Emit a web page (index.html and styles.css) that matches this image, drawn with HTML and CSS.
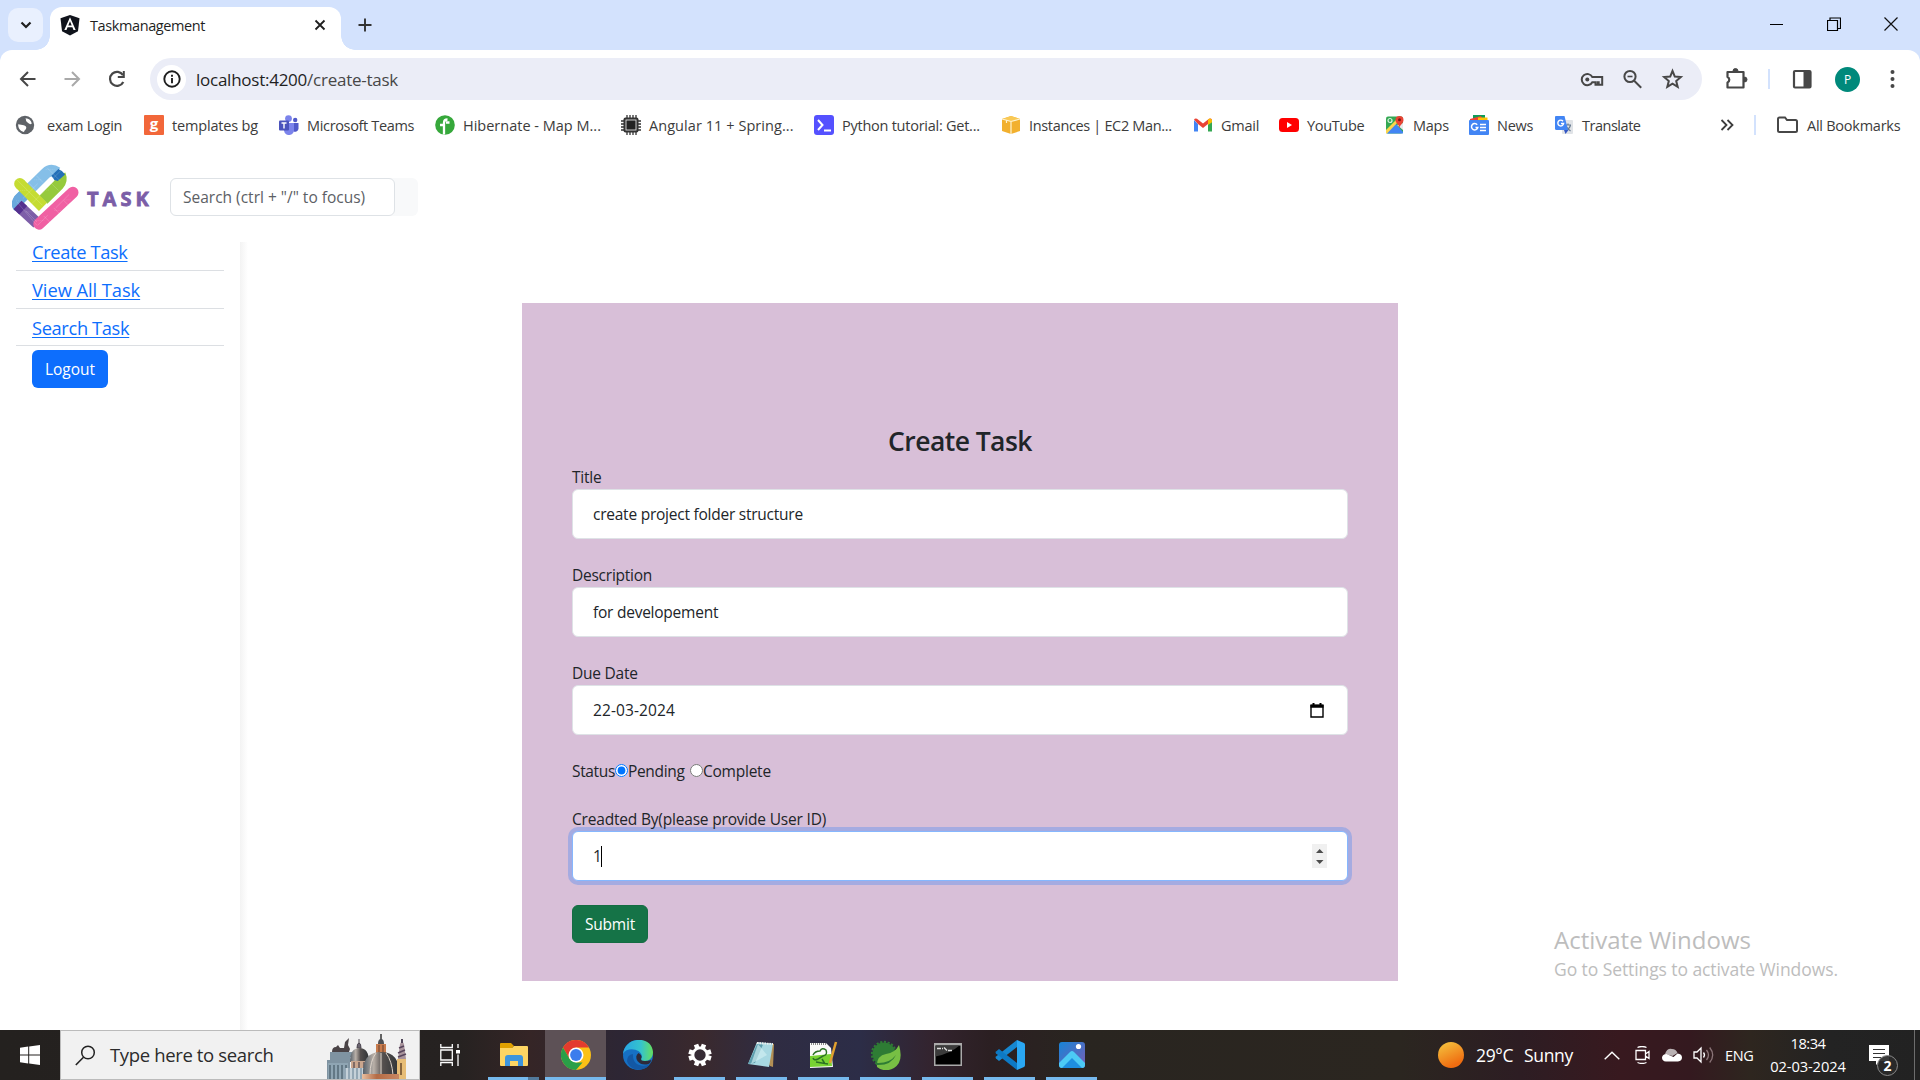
FILE: index.html
```html
<!DOCTYPE html>
<html lang="en">
<head>
<meta charset="utf-8">
<title>Taskmanagement</title>
<link rel="stylesheet" href="styles.css">
</head>
<body>
<div class="screen">

  <header class="tabstrip">
    <div class="tab-search"><svg width="12" height="8" viewBox="0 0 12 8"><path d="M1.5 1.5 6 6l4.500-4.500" fill="none" stroke="#1f1f1f" stroke-width="2.200"/></svg></div>
    <div class="tab">
      <svg width="20" height="22" viewBox="0 0 20 22"><path d="M10 1 19.500 4.300 18 17.300 10 21.500 2 17.300.5 4.300Z" fill="#10131c"/><path d="M10 3.300 4.300 16h2.200l1.100-2.800h4.800l1.100 2.800h2.200ZM10 7.300l1.700 4.100H8.300Z" fill="#fff"/></svg>
      <span class="tab-title">Taskmanagement</span>
      <svg width="12" height="12" viewBox="0 0 12 12"><path d="m1.500 1.500 9 9m0-9-9 9" stroke="#1f1f1f" stroke-width="1.800"/></svg>
    </div>
    <svg class="new-tab" width="14" height="14" viewBox="0 0 14 14"><path d="M7 .5v13M.5 7h13" stroke="#333" stroke-width="1.900"/></svg>
    <div class="window-buttons">
      <svg width="14" height="14" viewBox="0 0 14 14"><path d="M0 7.500h13" stroke="#000"/></svg>
      <svg width="14" height="14" viewBox="0 0 14 14"><path d="M.5 3.500h10v10H.5ZM3 3.500v-2.500h10.500v10.500h-3" fill="none" stroke="#000" stroke-width="1.200"/></svg>
      <svg width="14" height="14" viewBox="0 0 14 14"><path d="m.5.5 13 13m0-13-13 13" stroke="#111" stroke-width="1.200"/></svg>
    </div>
  </header>

  <div class="toolbar">
    <svg class="ic" viewBox="0 0 24 24"><path d="M19.500 12H5m7-7-7 7 7 7" fill="none" stroke="#474747" stroke-width="2"/></svg>
    <svg class="ic" viewBox="0 0 24 24"><path d="M4.500 12H19m-7-7 7 7-7 7" fill="none" stroke="#a9a9a9" stroke-width="2"/></svg>
    <svg class="ic" viewBox="0 0 24 24"><path d="M18.300 15A7 7 0 1 1 18 8.200" fill="none" stroke="#474747" stroke-width="2.200"/><path d="M19.800 4v7h-7l0-2h5V4Z" fill="#474747"/></svg>
    <div class="omnibox">
      <span class="site-info"><svg width="18" height="18" viewBox="0 0 18 18"><circle cx="9" cy="9" r="7.700" fill="none" stroke="#1f1f1f" stroke-width="1.900"/><path d="M9 8v5.200M9 4.700v2" stroke="#1f1f1f" stroke-width="1.900"/></svg></span>
      <span class="url">localhost:4200<span class="path">/create-task</span></span>
      <svg class="ic" viewBox="0 0 24 24"><g fill="none" stroke="#474747" stroke-width="2"><path d="M12.300 10a5.600 5.600 0 1 0 0 5.200h3.200v2.600h2.200v-2.600h1v2.600h3.500v-7.800Z"/></g><circle cx="7.300" cy="12.600" r="2" fill="#474747"/></svg>
      <svg class="ic" viewBox="0 0 24 24"><g fill="none" stroke="#474747" stroke-width="2"><circle cx="10" cy="9.500" r="5.600"/><path d="m14.200 13.700 7 7"/><path d="M7.500 9.500h5" stroke-width="1.600"/></g></svg>
      <svg class="ic" viewBox="0 0 24 24"><path d="m12.500 4 2.300 5.600 6 .5-4.600 3.900 1.500 5.900-5.200-3.200-5.200 3.200 1.500-5.900-4.600-3.900 6-.5Z" fill="none" stroke="#474747" stroke-width="2"/></svg>
    </div>
    <svg class="ic puzzle" viewBox="0 0 24 24"><path d="M3.500 5h16v15.500h-16v-5a3 3 0 0 0 0-5.500Z" fill="none" stroke="#474747" stroke-width="2.200" stroke-linejoin="round"/><path d="M9 4a2.500 2.500 0 0 1 5 0ZM20.500 10a2.500 2.500 0 0 1 0 5Z" fill="#474747" stroke="#474747"/></svg>
    <i class="divider"></i>
    <svg class="ic" viewBox="0 0 24 24"><rect x="4" y="4" width="16.500" height="16.500" rx="1" fill="none" stroke="#474747" stroke-width="2.200"/><path d="M13.500 4h7v16.500h-7Z" fill="#474747"/></svg>
    <span class="avatar">P</span>
    <svg class="ic" viewBox="0 0 24 24"><g fill="#474747"><circle cx="12.500" cy="5" r="2"/><circle cx="12.500" cy="12" r="2"/><circle cx="12.500" cy="19" r="2"/></g></svg>
  </div>

  <nav class="bookmarks">
    <a class="exam"><svg viewBox="0 0 20 20"><circle cx="10" cy="10" r="9.200" fill="#5f6368"/><path d="M10.500 3.200c3.600.2 5.700 2.300 6.300 5.200-1.900 1.900-3.400-.2-4.700-1.300-1.700-1-.6-2.300-1.600-3.900ZM3.200 9.300l4.300.7c1.600.4 3.800.8 3.800 2.600 0 2-1.600 2.200-2.400 4.400C5.200 16 3 13.300 3.200 9.300Z" fill="#fff"/></svg><span>exam Login</span></a>
    <a><i class="g-mark">g</i><span class="l2">templates bg</span></a>
    <a><svg viewBox="0 0 20 20"><circle cx="9.500" cy="3.600" r="3.400" fill="#7b83eb"/><circle cx="16.200" cy="5" r="2.200" fill="#5059c9"/><path d="M13 8h6.500v5.500a3.500 3.500 0 0 1-5 3Z" fill="#5059c9"/><path d="M5 8h10v6.500a5 5 0 0 1-10 1Z" fill="#7b83eb"/><rect y="5.500" width="10" height="10" rx="1" fill="#4b53bc"/><path d="M2.500 8h5M5 8v5.500" stroke="#fff" stroke-width="1.400"/></svg><span class="l3">Microsoft Teams</span></a>
    <a><svg viewBox="0 0 20 20"><circle cx="10" cy="10" r="9.800" fill="#36a83b"/><path d="M9 19.500V7.800q0-3.300 3.500-3.300M5 10h4m2-2.500h3.500" fill="none" stroke="#fff" stroke-width="2.300"/></svg><span class="l0">Hibernate - Map M...</span></a>
    <a><svg viewBox="0 0 20 20"><g stroke="#333" stroke-width="1.300"><path d="M6 0v20M9 0v20M12 0v20M15 0v20M0 6h20M0 9h20M0 12h20M0 15h20"/></g><rect x="2.500" y="2.500" width="15" height="15" rx="2" fill="#333"/><rect x="5" y="5" width="10" height="10" fill="#222" stroke="#ddd" stroke-width=".9"/></svg><span class="l1">Angular 11 + Spring...</span></a>
    <a><svg viewBox="0 0 20 20"><rect width="20" height="20" rx="3" fill="#5551ff"/><path d="m4 5 4.500 5L4 15m6 .5h7" fill="none" stroke="#fff" stroke-width="2"/></svg><span>Python tutorial: Get...</span></a>
    <a><svg viewBox="0 0 20 20"><path d="m1 4 9-3 9 3v12l-9 3-9-3Z" fill="#f2b02e"/><path d="m1 4 9 2.500L19 4l-9-3Z" fill="#f9c955"/><path d="m1 4 9 2.500L19 4M10 6.500V19M5.500 5v3" fill="none" stroke="#fff3cf" stroke-width="1.200"/></svg><span class="l3">Instances | EC2 Man...</span></a>
    <a><svg viewBox="0 0 20 20"><path d="M1 5v11.500h4V9Z" fill="#4285f4"/><path d="M19 5v11.500h-4V9Z" fill="#34a853"/><path d="M1 4.500Q2 3 4 3.700l6 4.800 6-4.800q2-.7 3 .8L15 9l-5 4-5-4Z" fill="#ea4335"/><path d="M15 4.500q3-2.200 4 .7v2L15 10Z" fill="#fbbc04"/></svg><span>Gmail</span></a>
    <a><svg viewBox="0 0 20 20"><rect y="3" width="20" height="14" rx="3.500" fill="#f00"/><path d="m8 7 5 3-5 3Z" fill="#fff"/></svg><span class="l3">YouTube</span></a>
    <a><svg viewBox="0 0 20 20"><rect x="1" y="1.500" width="17" height="17" rx="2" fill="#34a853"/><path d="m1 17 9-9 8 9v1.500H2Z" fill="#4285f4"/><path d="M1 15 12 4l2 2L2 18.500H1Z" fill="#fbd64b"/><path d="m12 10 6 5V8Z" fill="#e8eaed"/><path d="M14.500 13c0-3-4-4.500-4-8a4 4 0 0 1 8 0c0 3.500-4 5-4 8Z" fill="#ea4335"/><circle cx="14.500" cy="4.700" r="1.500" fill="#7d1710"/><circle cx="5" cy="5.500" r="2" fill="none" stroke="#d8f3df" stroke-width="1.200"/></svg><span>Maps</span></a>
    <a><svg viewBox="0 0 20 20"><path d="M4 0h12v5H4Z" fill="#0c9d58"/><path d="m1 4 11-3 2 4H1Z" fill="#ea4335"/><path d="M9 2.500h9.500V6H9Z" fill="#ffc107"/><rect y="5" width="20" height="15" rx="1" fill="#4285f4"/><path d="M8.200 9.700A3.200 3.200 0 1 0 8.800 12.500H6.500M11 9.500h6M11 12.500h6M11 15.500h6" fill="none" stroke="#fff" stroke-width="1.500"/></svg><span>News</span></a>
    <a><svg viewBox="0 0 20 20"><rect x="8" y="5" width="11" height="14" rx="1" fill="#e0e3e7"/><path d="M11 10h6m-3-1.500V10m2.500 0q-1 4-4.500 5m0-4q1.500 3 4.500 5" fill="none" stroke="#667b91" stroke-width="1.200"/><path d="M1.500 1h9l3.500 14H2.500Q1 15 1 13.500V2Z" fill="#4285f4"/><path d="m10 15 4.500 0L11.500 19Z" fill="#3457c4"/><path d="M9 6.200A2.900 2.900 0 1 0 9.600 8.500H7" fill="none" stroke="#fff" stroke-width="1.400"/></svg><span class="l4">Translate</span></a>
    <svg class="overflow" viewBox="0 0 14 12"><path d="m1.500 1 5 5-5 5m6-10 5 5-5 5" fill="none" stroke="#3c3c3c" stroke-width="1.800"/></svg>
    <i class="divider"></i>
    <a class="all"><svg viewBox="0 0 22 20"><path d="M2 4q0-1.500 1.500-1.500H9l2 2.500h8.500Q21 5 21 6.500v9q0 1.500-1.500 1.500h-16Q2 17 2 15.500Z" fill="none" stroke="#474747" stroke-width="2"/></svg><span>All Bookmarks</span></a>
  </nav>

  <main class="page">
    <div class="page-head">
      <svg class="logo" viewBox="12 17 199 197">
        <g fill="none" stroke-width="34">
          <path d="M29 127 113 44Q128 30 146 42" stroke="#85bfe8"/>
          <path d="M29 142Q25 132 34 122L52 104" stroke="#6aa9dd" stroke-linecap="round"/>
          <path d="m29 140 58 54" stroke="#7d5ea8"/>
          <path d="m28 139 17 16" stroke="#54308f"/>
          <path d="M92 196 193 102" stroke="#f060a3" stroke-linecap="round"/>
          <path d="M105 124 150 79Q162 66 155 49" stroke="#96ca3d"/>
        </g>
        <path d="m129 52 21-20q13 5 20 16l-22 20-10-3Z" fill="#2470b8"/>
        <path d="m35 76 69 69" stroke="#c5dc32" stroke-width="34"/>
        <circle cx="35" cy="76" r="17" fill="#c5dc32"/>
        <g stroke="#fff" stroke-opacity=".25" stroke-width="2" fill="none"><path d="m24 62 78 78M62 74l30 30m-8-52 20 20m12-44 40 40m-38-4 32 32M26 130l60 70m-34-44 34 34m20-18 24 24m6-48 24 24m6-46 18 18M44 120l44-44m-24 66 44-44m-20 102 30-30m24-22 40-40m-18-78-40 40"/><path d="M112 33h26M78 64h24M36 96h22M100 95h24M24 127h20M52 160h20M82 186h26M138 156h20M168 124h20" stroke-dasharray="3 3"/></g>
      </svg>
      <span class="brand">TASK</span>
      <div class="search-group"><input class="search" type="text" placeholder="Search (ctrl + &quot;/&quot; to focus)"></div>
    </div>
    <div class="page-body">
      <aside class="sidebar">
        <ul class="menu">
          <li><a href="#">Create Task</a></li>
          <li><a href="#" class="mid">View All Task</a></li>
          <li><a href="#">Search Task</a></li>
        </ul>
        <button class="btn btn-primary">Logout</button>
      </aside>
      <form class="card">
        <h2>Create Task</h2>
        <div class="field"><label>Title</label><div class="input">create project folder structure</div></div>
        <div class="field"><label>Description</label><div class="input">for developement</div></div>
        <div class="field"><label>Due Date</label><div class="input date"><span>22-03-2024</span>
          <svg width="14" height="15" viewBox="0 0 14 15"><path d="M1 2.500h12V14H1Z" fill="none" stroke="#000" stroke-width="1.400"/><path d="M.5 1.500h13v3.300H.5ZM2.500 0h2v2h-2Zm7 0h2v2h-2Z"/></svg></div></div>
        <div class="status"><span class="st">Status</span><input type="radio" name="s" checked><span class="pend">Pending</span><input type="radio" name="s"><span class="comp">Complete</span></div>
        <div class="field"><label class="wide">Creadted By(please provide User ID)</label><div class="input focus"><span>1<i class="caret"></i></span>
          <svg class="spin" viewBox="0 0 15 24"><path fill="#f0f0f0" d="M0 0h15v24H0Z"/><path d="M4 9h7.500L7.700 5ZM4 16h7.500l-3.800 4Z" fill="#4d4d4d"/></svg></div></div>
        <button class="btn btn-success" type="button">Submit</button>
      </form>
    </div>
    <div class="watermark"><div class="wm-1">Activate Windows</div><div class="wm-2">Go to Settings to activate Windows.</div></div>
  </main>

  <footer class="taskbar">
    <div class="start"><svg width="20" height="20" viewBox="0 0 20 20"><path d="M0 2.700 8.200 1.600V9.500H0Zm9.200-1.300L20 0v9.500H9.200ZM0 10.500h8.200v8L0 17.300Zm9.200 0H20V20L9.200 18.600Z" fill="#fff"/></svg></div>
    <div class="tb-search">
      <svg width="21" height="21" viewBox="0 0 21 21"><circle cx="13" cy="7.500" r="6.300" fill="none" stroke="#222" stroke-width="1.500"/><path d="M8.500 12.200.8 20" stroke="#222" stroke-width="1.600"/></svg>
      <span>Type here to search</span>
      <svg class="skyline" viewBox="0 0 85 45">
        <defs>
          <linearGradient id="dome"><stop offset="0" stop-color="#55606a"/><stop offset=".3" stop-color="#b9b0a8"/><stop offset=".55" stop-color="#55504f"/><stop offset="1" stop-color="#2f3336"/></linearGradient>
          <linearGradient id="copper"><stop offset="0" stop-color="#e8bfa0"/><stop offset=".4" stop-color="#b46b45"/><stop offset="1" stop-color="#c98762"/></linearGradient>
        </defs>
        <path d="M5 18h22v5h-2v22H2V26h3Z" fill="#7f93a1"/><path d="M3 29h20v16H3Z" fill="#8fa5b3"/><path d="M5 31v14m4-14v14m4-14v14m4-14v14m4-14v14" stroke="#566977" stroke-width="1.500"/>
        <path d="M7 18q0-5 4-5l2-2 2 3h4l1-6 4-4-1 7 2 4-1 3Z" fill="#4a4346"/>
        <path d="M34 9V5m0 4q2 0 2 5h-4q0-5 2-5Z" stroke="#4c4650" fill="#6b6570"/><path d="M25 28q0-14 9.500-14T44 28Z" fill="url(#dome)"/><path d="M26 27h18v11H26Z" fill="#caa68e"/><path d="M29 28v8m5-8v8m5-8v8" stroke="#67585a" stroke-width="1.500"/>
        <path d="M19 34h24v11H19Z" fill="#93a7b5"/><path d="M22 34v11m4-11v11m4-11v11m4-11v11m4-11v11" stroke="#dbe3e8" stroke-width="1.400"/>
        <path d="M56 0v6" stroke="#333" stroke-width="1.500"/><path d="M53 10q0-5 3-5t3 5Z" fill="#4c4f54"/><path d="M51 10h10v10H51Z" fill="#c87c4e"/><path d="M54 11v8m4-8v8" stroke="#66402f"/>
        <path d="M38 41q-1-23 18-23t18 23Z" fill="url(#dome)"/><path d="M56 19v22M51 19q-6 8-6 22m16-22q6 8 7 22" fill="none" stroke="#ddd3c9" stroke-width="1"/>
        <path d="M72 25h9v20h-9Z" fill="#e7bd76"/><path d="M73 25 75 10q2-5 4 0l2 15Z" fill="#a9949c"/><path d="m74 14 5-2m-6 7 7-3m-7 7 8-3" stroke="#57455c" stroke-width="1.500"/><path d="M77 5v4" stroke="#4e4558" stroke-width="2"/><path d="M76 29v12" stroke="#87653d" stroke-width="2"/>
        <path d="M37 40h37v5H37Z" fill="url(#copper)"/>
      </svg>
    </div>
    <div class="taskview"><svg width="20" height="22" viewBox="0 0 20 22"><path d="M.8 0v3.500h11.500V0M.8 22v-3.500h11.500V22M.8 6h11.500v10H.8ZM18 0v4m0 6.500V22" fill="none" stroke="#fff" stroke-width="1.300"/><path d="M16 6h4v3.500h-4Z" fill="#fff"/></svg></div>
    <div class="apps">
      <div class="app explorer"><svg viewBox="0 0 30 30"><path d="M1 4q0-1 1-1h10l3 3-2 2H1Z" fill="#dfa000"/><path d="M1 8h12l2-2h13q1 0 1 1v18q0 1-1 1H2q-1 0-1-1Z" fill="#fdd563"/><path d="M6 26v-8q0-3 3-3h12q3 0 3 3v8h-5v-5h-8v5Z" fill="#3d95dd"/></svg></div>
      <div class="app active"><svg viewBox="0 0 30 30"><circle cx="15" cy="15" r="15" fill="#fbc116"/><path d="M2 7.500A15 15 0 0 1 28 7.500H15L8.500 18.800Z" fill="#e33b2e"/><path d="M2 7.500 8.500 18.800 15 22.500h6.500L15 30A15 15 0 0 1 2 7.500Z" fill="#2a9f48"/><circle cx="15" cy="15" r="7.500" fill="#fff"/><circle cx="15" cy="15" r="5.900" fill="#3b7ded"/></svg></div>
      <div class="app idle"><svg viewBox="0 0 30 30"><defs><linearGradient id="edge"><stop offset="0" stop-color="#28a5e4"/><stop offset=".6" stop-color="#35c3cd"/><stop offset="1" stop-color="#65df5e"/></linearGradient></defs><circle cx="15" cy="15" r="15" fill="#1670c4"/><path d="M10 14c-1 11 9 14 17 10-5 8-20 8-23-3q0-6 6-7Z" fill="#1358a5"/><path d="M15.500 13q4 2 3 6 5 3 10 1-1 3-3 4-7 2-11-3-3-5 1-8Z" fill="#2d2a3a"/><path d="M0 14C2-4 29-5 30 12c0 6-4 9-8 9-5 0-4-2-3-4C19 9 4 6 0 14Z" fill="url(#edge)"/></svg></div>
      <div class="app"><svg viewBox="0 0 30 30"><path d="m11 4.500 8 21m-8 0 8-21M4 11.500l22 7m-22 0 22-7" stroke="#fff" stroke-width="4.600"/><circle cx="15" cy="15" r="8.500" fill="#fff"/><circle cx="15" cy="15" r="5.700" fill="#352b34"/></svg></div>
      <div class="app"><svg viewBox="0 0 30 30"><path d="m9 3 18 1-1 23-3-1Z" fill="#b39055"/><path d="M10 2 26 3.500 22 27 1 24Z" fill="#a8d8e2"/><path d="m10 4 6 .5L8 23l-7 1Z" fill="#5e9eae"/><path d="M11 4 20 15 4 24Z" fill="#d1eff2" opacity=".65"/><path d="m10 3 16 1" stroke="#eee" stroke-width="2" stroke-dasharray="1.500 1"/></svg></div>
      <div class="app"><svg viewBox="0 0 30 30"><path d="M1 3h16l5 5 2 19-23 1Z" fill="#fafafa"/><path d="m1 16 21-2 1 12-22 1Z" fill="#78d333"/><path d="M4 15q2-4 7-4 2-4 6-1 2 5-3 6l-5 3q-4 2-5-1m3 4 12 2m-6-5 3 5" fill="none" stroke="#2b7224" stroke-width="1.500"/><path d="m27 2-6 21" stroke="#e1a02e" stroke-width="2.500"/><path d="M2 4h15" stroke="#888" stroke-width="2" stroke-dasharray="1 1"/></svg></div>
      <div class="app"><svg viewBox="0 0 30 30"><circle cx="13" cy="14" r="11.500" fill="#2e7c34"/><circle cx="13" cy="14" r="12.200" fill="none" stroke="#2e7c34" stroke-width="2" stroke-dasharray="2.200 1.600"/><path d="M28 5q5 17-5 23-9 5-17-1-1-11 9-13 9-1 13-9Z" fill="#77bf44"/><path d="M5 25q15 1 20-10-7 9-20 8Z" fill="#2e7c34"/></svg></div>
      <div class="app"><svg viewBox="0 0 30 30"><path d="M1 3h28v23H1Z" fill="#aaa"/><path d="M2.500 5.500h25v19h-25Z" fill="#000"/><path d="M2.500 5.500h24q-9 8-24 11Z" fill="#3b3b3b"/><path d="M4 8.500h4m1 0h1m1-1 3 3m1 0h4" stroke="#ddd" stroke-width="1.400"/></svg></div>
      <div class="app"><svg viewBox="0 0 30 30"><path d="m22 7-18 14-3-2.500q-1-1 0-2L22 0Z" fill="#1687d0"/><path d="M22 23 4 9l-3 2.500q-1 1 0 2L22 30Z" fill="#0d79c4"/><path d="m22 0 7 3q1 .5 1 2v20q0 1.500-1 2l-7 3Z" fill="#2aa7f3"/></svg></div>
      <div class="app"><svg viewBox="0 0 30 30"><defs><linearGradient id="ph" x2="1" y2="1"><stop stop-color="#1684d8"/><stop offset="1" stop-color="#7a5db2"/></linearGradient></defs><rect x="2" y="2" width="26" height="26" rx="3" fill="url(#ph)"/><path d="m2 23 11-11q2-2 4 0l11 11v2q0 3-3 3H5q-3 0-3-3Z" fill="#4ccaf5"/><path d="m5 28 10-10 10 10Z" fill="#1e8fe0"/><circle cx="21.500" cy="6.500" r="2.600" fill="#fff"/></svg></div>
    </div>
    <div class="weather"><i class="sun"></i><span class="temp">29°C</span><span class="sky">Sunny</span></div>
    <div class="tray">
      <svg width="16" height="9" viewBox="0 0 16 9"><path d="m.7 8.200 7.300-7 7.300 7" fill="none" stroke="#fff" stroke-width="1.400"/></svg>
      <svg width="16" height="18" viewBox="0 0 16 18"><path d="M1 4.500h9.500v9H1Zm9.500 3.500L14 5.500v7L10.500 10M2.500 1.500q4.500-2 9 0m-9 15q4.500 2 9 0" fill="none" stroke="#fff" stroke-width="1.300"/></svg>
      <svg width="20" height="14" viewBox="0 0 20 14"><path d="M3 6Q5 0 10 1q4 0 5.500 4l-5 3L5 6.500Z" fill="#b9b1b3"/><path d="M4 13.500q-4-.3-4-4Q.5 6 4.500 6l7 3 4-3.500q4.500.500 4.500 4t-4 4Z" fill="#fff"/></svg>
      <svg width="21" height="18" viewBox="0 0 21 18"><path d="M1 6h3l4-4v14l-4-4H1Z" fill="none" stroke="#fff" stroke-width="1.300"/><path d="M10.500 6.500q2 2.500 0 5" fill="none" stroke="#fff" stroke-width="1.300"/><path d="M13.500 4q4 5 0 10m3.200-12.500q6 7.500 0 15" fill="none" stroke="#8b7578" stroke-width="1.300"/></svg>
    </div>
    <span class="lang">ENG</span>
    <div class="clock"><span class="time">18:34</span><span class="day">02-03-2024</span></div>
    <div class="notif"><svg width="20" height="20" viewBox="0 0 20 20"><path d="M0 0h20v16h-9l-4 4v-4H0Z" fill="#fff"/><path d="M4 4.500h12M4 8.500h12M4 12.500h8" stroke="#333" stroke-width="1.200"/></svg><b class="badge">2</b></div>
    <i class="peek"></i>
  </footer>
</div>
</body>
</html>
```
FILE: styles.css
```css
* { box-sizing: border-box; }
body { margin: 0; font-family: "Open Sans", "Noto Sans", sans-serif; color: #212529; background: #fff; }
svg { display: block; flex: none; }
.screen { width: 1920px; height: 1080px; display: flex; flex-direction: column; overflow: hidden; }
span, a, label { white-space: nowrap; }

/* tab strip */
.tabstrip { height: 50px; flex: none; background: #d3e2fd; display: flex; align-items: flex-start; padding-left: 8px; }
.tab-search { width: 35px; height: 34px; margin-top: 8px; border-radius: 10px; background: #e9f0fe; display: flex; align-items: center; justify-content: center; }
.tab { position: relative; width: 291px; height: 43px; margin: 7px 0 0 7px; padding: 0 15px 7px 10px; background: #fff; border-radius: 12px 12px 0 0; display: flex; align-items: center; }
.tab::before, .tab::after { content: ""; position: absolute; bottom: 0; width: 14px; height: 14px; }
.tab::before { left: -14px; background: radial-gradient(circle at 0 0, transparent 13.500px, #fff 14px); }
.tab::after { right: -14px; background: radial-gradient(circle at 100% 0, transparent 13.500px, #fff 14px); }
.tab-title { flex: 1; margin-left: 10px; font-size: 14.500px; letter-spacing: -.4px; color: #1f1f1f; }
.new-tab { margin: 18px 0 0 17px; }
.window-buttons { margin: 17px 22px 0 auto; display: flex; gap: 43px; }

/* toolbar */
.toolbar { height: 58px; flex: none; position: relative; display: flex; align-items: center; padding: 0 16px; background: linear-gradient(#d3e2fd 14px, #fff 14px); }
.toolbar::before { content: ""; position: absolute; inset: 0; background: #fff; border-radius: 12px 12px 0 0; }
.toolbar > * { position: relative; flex: none; }
.ic { width: 24px; height: 24px; }
.toolbar > .ic:nth-child(2) { margin: 0 21px 0 20px; }
.omnibox { width: 1552px; height: 42px; margin-left: 21px; padding: 0 18px 0 7px; border-radius: 21px; background: #ebedf7; display: flex; align-items: center; gap: 16px; }
.site-info { width: 29px; height: 29px; border-radius: 50%; background: #fff; display: flex; align-items: center; justify-content: center; }
.url { flex: 1; margin-left: -6px; font-size: 17px; letter-spacing: -.25px; color: #1f1f1f; }
.path { color: #474747; }
.puzzle { margin: 0 20px 0 22px; }
.divider { width: 2px; height: 20px; background: #d3e2fd; margin-right: 20px; }
.avatar { width: 25px; height: 25px; margin: 0 20px 0 21px; border-radius: 50%; background: #00897b; color: #fff; font-size: 12px; line-height: 25px; text-align: center; }

/* bookmarks */
.bookmarks { height: 42px; flex: none; padding: 0 16px 8px 15px; display: grid; align-items: center; grid-template-columns: 129px 135px 156px 186px 193px 187px 192px 86px 106px 84px 85px 166px 34px 22px auto; font-size: 14.500px; letter-spacing: -.25px; color: #3c3c3c; }
.bookmarks a { display: flex; align-items: center; gap: 8px; }
.bookmarks a svg { width: 20px; height: 20px; }
.bookmarks .exam { gap: 12px; }
.bookmarks .all { gap: 9px; }
.bookmarks .all svg { width: 22px; }
.bookmarks .overflow { width: 14px; height: 12px; }
.l0 { letter-spacing: 0; }
.l1 { letter-spacing: .06px; }
.l2 { letter-spacing: -.17px; }
.l3 { letter-spacing: -.34px; }
.l4 { letter-spacing: -.48px; }
.g-mark { width: 20px; height: 20px; border-radius: 1px; background: #f2673a; color: #fff; font: 700 15px/17px "Open Sans", sans-serif; text-align: center; letter-spacing: 0; }

/* page */
.page { position: relative; height: 880px; flex: none; display: flex; flex-direction: column; }
.page-head { height: 88px; flex: none; display: flex; align-items: center; padding: 5px 0 0 12px; }
.logo { width: 67px; height: 66px; }
.brand { width: 75px; margin: 4px 0 0 8px; font: 700 20px/24px "Open Sans", sans-serif; letter-spacing: 4px; color: #7b5ea7; -webkit-text-stroke: .8px #7b5ea7; }
.search-group { width: 248px; margin: 0 0 0 8px; background: #f8f9fa; border-radius: 6px; display: flex; }
.search { width: 225px; height: 38px; padding: 0 12px; border: 1px solid #dee2e6; border-radius: 6px; font: 15.500px "Open Sans", sans-serif; color: #212529; background: #fff; }
.search::placeholder { color: #5c6065; opacity: 1; }
.page-body { flex: 1; display: flex; align-items: flex-start; }
.sidebar { width: 248px; height: 100%; flex: none; padding: 0 24px 0 16px; background: linear-gradient(90deg, #f3f3f3, #fff) 240px 4px / 8px 100% no-repeat; }
.menu { margin: 0; padding: 0; list-style: none; }
.menu li { padding: 6px 16px 5px; border-bottom: 1px solid #dcdfe3; line-height: 26px; }
.menu li:first-child { padding-top: 1px; }
.menu li:last-child { padding-bottom: 4px; }
.menu a { display: block; color: #0d6efd; font-size: 18.300px; letter-spacing: -.36px; text-underline-offset: 2px; }
.menu .mid { letter-spacing: -.05px; }
.btn { height: 38px; border: 0; border-radius: 6px; padding: 0; font: 15.500px "Open Sans", sans-serif; color: #fff; display: block; }
.btn-primary { width: 76px; margin: 4px 0 0 16px; background: #0d6efd; }
.btn-success { width: 76px; background: #157347; border: 1px solid #146c43; letter-spacing: -.2px; }

.card { width: 876px; height: 678px; margin: 65px 0 0 274px; padding: 121px 50px 0; background: #d8bfd8; font-size: 15.500px; letter-spacing: -.24px; }
.card h2 { margin: 0 0 7px; font-size: 26.500px; line-height: 34px; font-weight: 600; letter-spacing: -.56px; text-align: center; }
.field { margin-bottom: 24px; }
.field label { display: block; height: 24px; line-height: 25px; }
.field .wide { letter-spacing: -.19px; }
.input { height: 50px; padding: 0 20px; border: 1px solid #dee2e6; border-radius: 6px; background: #fff; display: flex; align-items: center; justify-content: space-between; }
.date { padding-right: 23px; letter-spacing: .11px; }
.focus { border-color: #86b7fe; box-shadow: 0 0 0 4px rgba(13, 110, 253, .25); }
.focus span { display: flex; align-items: center; }
.caret { width: 1px; height: 21px; margin-left: -1px; background: #000; }
.spin { width: 15px; height: 24px; }
.status { height: 24px; margin-bottom: 24px; display: flex; align-items: center; line-height: 25px; }
.status input { width: 13px; height: 13px; margin: 0 0 1px; flex: none; }
.status .st { width: 43px; letter-spacing: -.34px; }
.status .pend { width: 62px; letter-spacing: -.34px; }
.watermark { position: absolute; left: 1554px; top: 772px; color: #bdbdbd; }
.wm-1 { font-size: 24px; line-height: 35px; }
.wm-2 { font-size: 17.500px; line-height: 24px; letter-spacing: -.08px; white-space: nowrap; }

/* taskbar */
.taskbar { height: 50px; flex: none; display: flex; align-items: center; color: #fff; background: linear-gradient(90deg, #24211f 0, #262221 460px, #352526 530px, #2d2634 620px, #3a292d 700px, #2f2c42 770px, #2c2d47 860px, #33242f 930px, #2b1f22 990px, #292520 1080px, #2b2620 1400px, #2d1d23 1520px, #38191f 1620px, #34191f 1690px, #2e261f 1750px, #232323 1830px, #222 1920px); }
.start { width: 60px; flex: none; display: flex; justify-content: center; }
.tb-search { width: 360px; height: 50px; flex: none; border: 1px solid #bbb; background: #f1f1f1; color: #2b2b2b; display: flex; align-items: center; padding-left: 14px; }
.tb-search span { margin: 0 0 2px 14px; width: 215px; font-size: 18.500px; letter-spacing: -.36px; }
.skyline { width: 85px; height: 45px; align-self: flex-end; }
.taskview { width: 63px; padding-left: 20px; flex: none; }
.apps { display: flex; gap: 1px; height: 50px; }
.app { position: relative; width: 61px; display: flex; align-items: center; justify-content: center; }
.app svg { width: 30px; height: 30px; }
.app::after { content: ""; position: absolute; left: 5px; right: 5px; bottom: 0; height: 3px; background: #76b9ed; }
.idle::after { display: none; }
.explorer::after { background: linear-gradient(90deg, #76b9ed 40px, #52799b 40px); }
.active { background: #5d5156; }
.active::after { left: 0; right: 0; }
.weather { display: flex; align-items: center; margin-left: 336px; width: 166px; font-size: 17.500px; letter-spacing: -.34px; }
.sun { width: 26px; height: 26px; border-radius: 50%; background: linear-gradient(155deg, #f4bd3b 10%, #ef6c10 80%); margin-right: 12px; }
.temp { width: 48px; }
.tray { display: flex; align-items: center; gap: 11px; width: 121px; }
.tray svg:first-child { margin-right: 4px; }
.lang { width: 45px; font-size: 14.500px; letter-spacing: -.35px; }
.clock { width: 76px; display: flex; flex-direction: column; align-items: center; font-size: 14.700px; line-height: 23px; letter-spacing: -.12px; }
.time { letter-spacing: -.5px; }
.notif { position: relative; width: 68px; padding-left: 23px; }
.badge { position: absolute; left: 31px; top: 10px; width: 21px; height: 21px; border: 1px solid #8a8a8a; border-radius: 50%; background: rgba(42, 42, 42, .92); font-size: 14px; line-height: 19px; text-align: center; }
.peek { width: 1px; height: 50px; background: #6d6d6d; }
```
